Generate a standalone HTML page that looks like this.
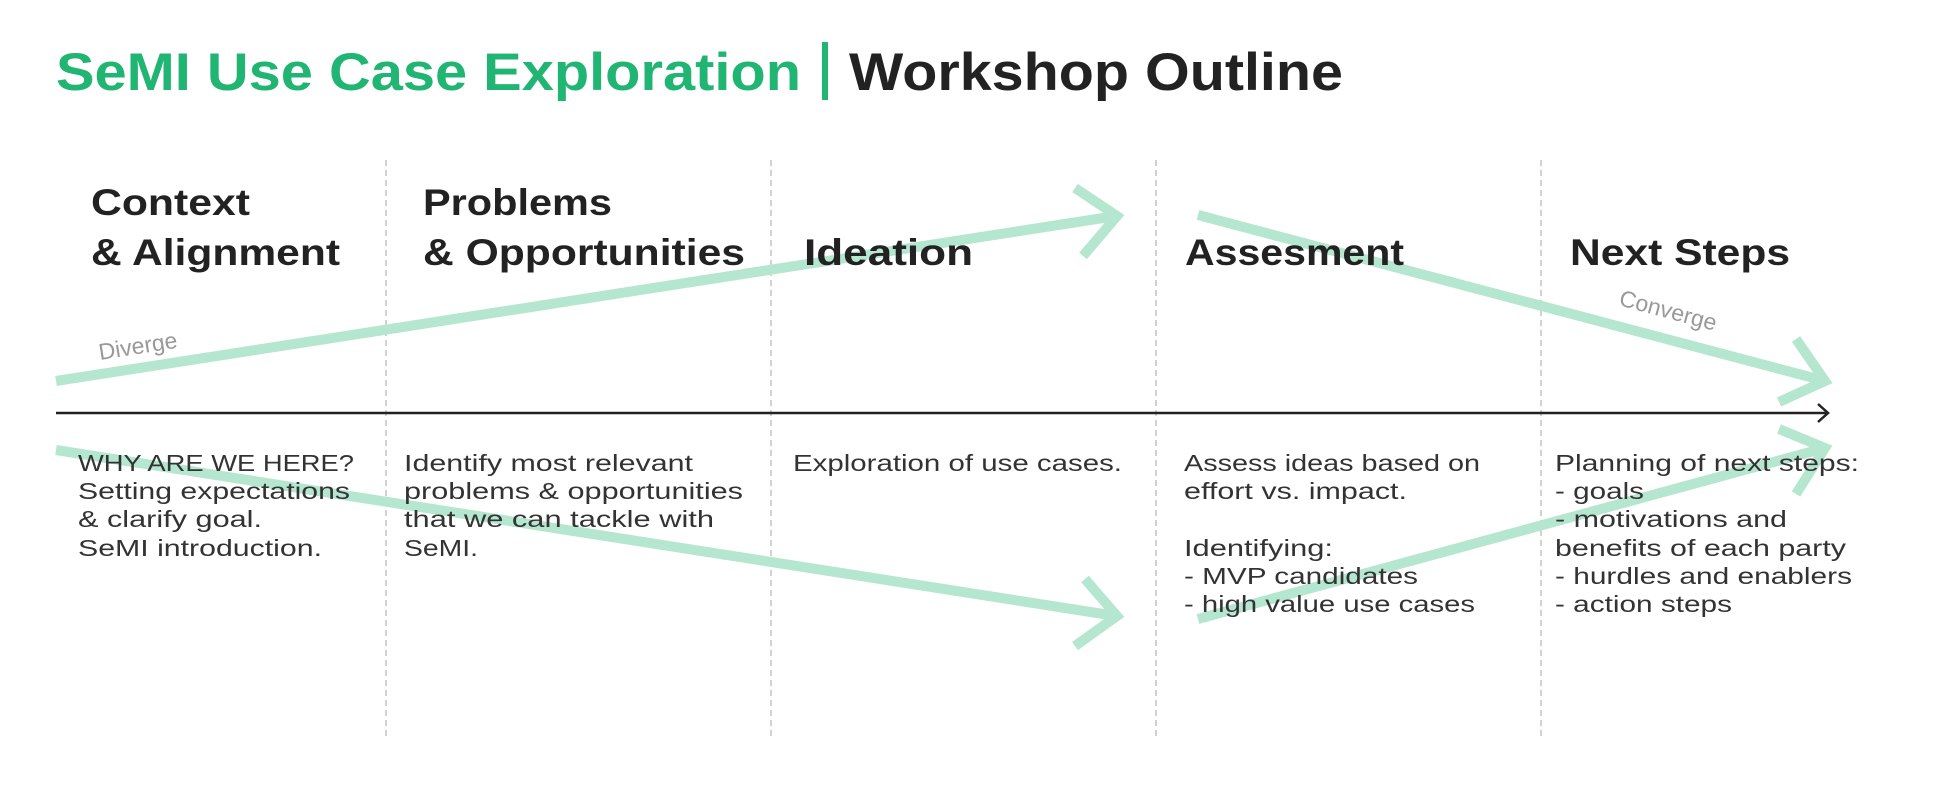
<!DOCTYPE html>
<html><head><meta charset="utf-8"><style>
html,body{margin:0;padding:0;background:#fff;}
svg{display:block;}
text{font-family:"Liberation Sans",sans-serif;}
.h{font-size:37px;font-weight:bold;fill:#222;}
.b{font-size:23px;fill:#333;}
</style></head><body>
<svg width="1950" height="806" viewBox="0 0 1950 806" xmlns="http://www.w3.org/2000/svg">
<text x="56" y="90" font-size="53" font-weight="bold" fill="#21b573" textLength="745" lengthAdjust="spacingAndGlyphs">SeMI Use Case Exploration</text>
<rect x="822" y="42" width="6" height="58" fill="#21b573"/>
<text x="849" y="90" font-size="53" font-weight="bold" fill="#222" textLength="494" lengthAdjust="spacingAndGlyphs">Workshop Outline</text>
<g stroke="#c4c4c4" stroke-width="1.5" stroke-dasharray="6,4">
<line x1="386" y1="160" x2="386" y2="740"/><line x1="771" y1="160" x2="771" y2="740"/>
<line x1="1156" y1="160" x2="1156" y2="740"/><line x1="1541" y1="160" x2="1541" y2="740"/>
</g>
<g fill="none" stroke="#b5e6d0" stroke-width="10">
<line x1="56" y1="381" x2="1116" y2="216"/><polyline points="1075,188 1117,216 1083,256"/>
<line x1="56" y1="450" x2="1116" y2="616"/><polyline points="1085,579 1117,616 1075,646"/>
<line x1="1198" y1="215" x2="1825" y2="381"/><polyline points="1796,339 1825,381 1779,402"/>
<line x1="1198" y1="619" x2="1825" y2="448"/><polyline points="1779,429 1825,448 1796,494"/>
</g>
<line x1="56" y1="413" x2="1826" y2="413" stroke="#222" stroke-width="2.5"/>
<polyline points="1818,404 1828,413 1818,422" fill="none" stroke="#222" stroke-width="2.5"/>
<text x="100" y="360" font-size="23" fill="#999" transform="rotate(-9 100 360)">Diverge</text>
<text x="1618" y="305" font-size="23" fill="#999" transform="rotate(15 1618 305)">Converge</text>
<text class="h" x="91" y="215" textLength="159" lengthAdjust="spacingAndGlyphs">Context</text>
<text class="h" x="91" y="265" textLength="249" lengthAdjust="spacingAndGlyphs">&amp; Alignment</text>
<text class="h" x="423" y="215" textLength="189" lengthAdjust="spacingAndGlyphs">Problems</text>
<text class="h" x="423" y="265" textLength="322" lengthAdjust="spacingAndGlyphs">&amp; Opportunities</text>
<text class="h" x="804" y="265" textLength="169" lengthAdjust="spacingAndGlyphs">Ideation</text>
<text class="h" x="1185" y="265" textLength="219" lengthAdjust="spacingAndGlyphs">Assesment</text>
<text class="h" x="1570" y="265" textLength="220" lengthAdjust="spacingAndGlyphs">Next Steps</text>
<g>
<text class="b" x="78" y="471" textLength="276" lengthAdjust="spacingAndGlyphs">WHY ARE WE HERE?</text>
<text class="b" x="78" y="499" textLength="272" lengthAdjust="spacingAndGlyphs">Setting expectations</text>
<text class="b" x="78" y="527" textLength="184" lengthAdjust="spacingAndGlyphs">&amp; clarify goal.</text>
<text class="b" x="78" y="556" textLength="244" lengthAdjust="spacingAndGlyphs">SeMI introduction.</text>
<text class="b" x="404" y="471" textLength="289" lengthAdjust="spacingAndGlyphs">Identify most relevant</text>
<text class="b" x="404" y="499" textLength="339" lengthAdjust="spacingAndGlyphs">problems &amp; opportunities</text>
<text class="b" x="404" y="527" textLength="310" lengthAdjust="spacingAndGlyphs">that we can tackle with</text>
<text class="b" x="404" y="556" textLength="74" lengthAdjust="spacingAndGlyphs">SeMI.</text>
<text class="b" x="793" y="471" textLength="329" lengthAdjust="spacingAndGlyphs">Exploration of use cases.</text>
<text class="b" x="1184" y="471" textLength="296" lengthAdjust="spacingAndGlyphs">Assess ideas based on</text>
<text class="b" x="1184" y="499" textLength="223" lengthAdjust="spacingAndGlyphs">effort vs. impact.</text>
<text class="b" x="1184" y="556" textLength="149" lengthAdjust="spacingAndGlyphs">Identifying:</text>
<text class="b" x="1184" y="584" textLength="234" lengthAdjust="spacingAndGlyphs">- MVP candidates</text>
<text class="b" x="1184" y="612" textLength="291" lengthAdjust="spacingAndGlyphs">- high value use cases</text>
<text class="b" x="1555" y="471" textLength="304" lengthAdjust="spacingAndGlyphs">Planning of next steps:</text>
<text class="b" x="1555" y="499" textLength="89" lengthAdjust="spacingAndGlyphs">- goals</text>
<text class="b" x="1555" y="527" textLength="232" lengthAdjust="spacingAndGlyphs">- motivations and</text>
<text class="b" x="1555" y="556" textLength="291" lengthAdjust="spacingAndGlyphs">benefits of each party</text>
<text class="b" x="1555" y="584" textLength="297" lengthAdjust="spacingAndGlyphs">- hurdles and enablers</text>
<text class="b" x="1555" y="612" textLength="177" lengthAdjust="spacingAndGlyphs">- action steps</text>
</g>
</svg>
</body></html>
